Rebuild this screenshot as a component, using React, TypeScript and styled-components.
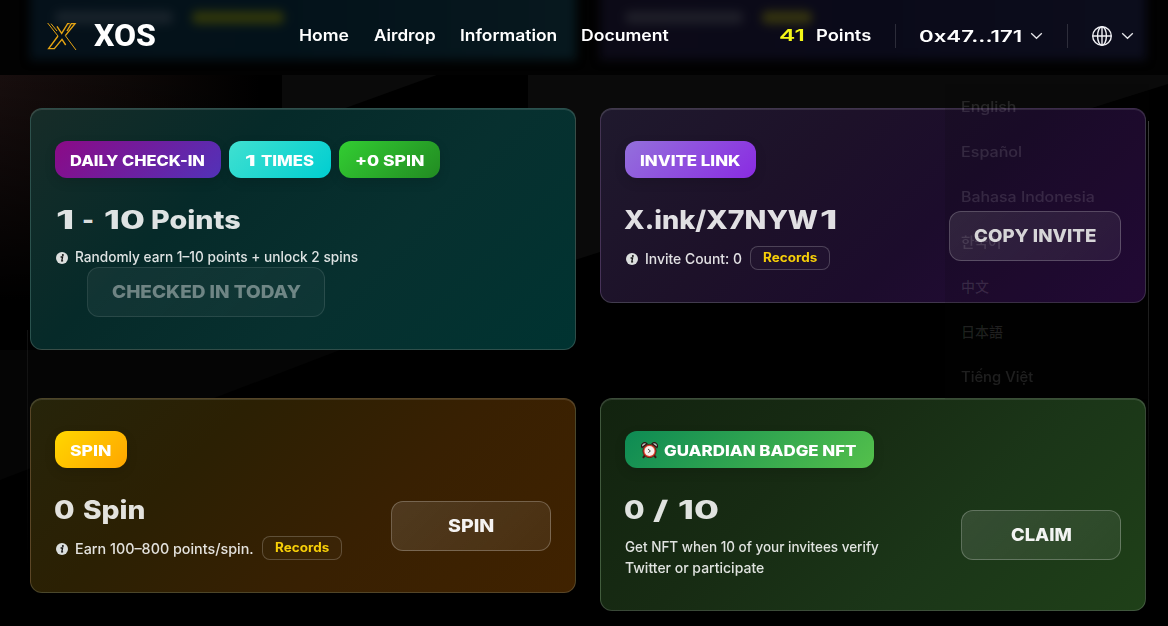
import React, { useLayoutEffect, useRef, useState } from "react";
import styled, { createGlobalStyle, css } from "styled-components";

const GlobalStyle = createGlobalStyle`
  * { box-sizing: border-box; }
  body { margin: 0; background: #000; overflow: hidden; }
`;

const wide = css`
  font-family: Inter, "Noto Sans CJK SC", "Noto Sans CJK KR", sans-serif;
`;

const Page = styled.div`
  position: relative;
  width: 1168px;
  height: 626px;
  overflow: hidden;
  background: #000;
  color: #fff;
  ${wide}
`;

const Backdrop = styled.svg`
  position: absolute;
  inset: 0;
`;

/* Text stretched horizontally to a set measure */
const FitBox = styled.span<{ $w: number; $ml: number }>`
  display: inline-block;
  flex: none;
  width: ${(p) => p.$w}px;
  margin-left: ${(p) => p.$ml}px;
  white-space: nowrap;
  text-align: left;
`;
const FitInner = styled.span`
  display: inline-block;
  transform-origin: 0 50%;
  white-space: pre;
`;

function Fit({ w, ml = 0, children }: { w: number; ml?: number; children: React.ReactNode }) {
  const ref = useRef<HTMLSpanElement>(null);
  const [scale, setScale] = useState(1);
  useLayoutEffect(() => {
    const measure = () => {
      if (ref.current && ref.current.offsetWidth) setScale(w / ref.current.offsetWidth);
    };
    measure();
    document.fonts?.ready.then(measure);
  }, [w]);
  return (
    <FitBox $w={w} $ml={ml}>
      <FitInner ref={ref} style={{ transform: `scaleX(${scale})` }}>{children}</FitInner>
    </FitBox>
  );
}

/* ---------- header ---------- */
const Header = styled.header`
  position: relative;
  z-index: 3;
  height: 72px;
  padding-left: 47px;
  display: flex;
  align-items: center;
  font-size: 16px;
  font-weight: 600;
  line-height: 19px;
`;
const Brand = styled.div`
  display: flex;
  align-items: center;
  gap: 17px;
  width: 252px;
`;
const BrandName = styled.span`
  font: 800 31px/38px Roboto, sans-serif;
`;
const Nav = styled.nav`
  display: flex;
  gap: 24px;
  width: 479.5px;
  padding-bottom: 1px;
`;
const Points = styled.div`
  display: flex;
  gap: 11px;
  padding-bottom: 1px;
`;
const Yellow = styled.span`
  color: #f4f718;
`;
const Divider = styled.i`
  width: 1px;
  height: 24px;
  background: rgba(255, 255, 255, 0.14);
  margin: 0 23px 0 24px;
`;
const Account = styled.div`
  display: flex;
  align-items: center;
  gap: 8px;
`;

/* Cards scrolled away under the header bar */
const Scrolled = styled.div`
  position: absolute;
  z-index: 1;
  top: -20px;
  left: 0;
  width: 1168px;
  height: 95px;
  overflow: hidden;
  background: #020202;
`;
const ScrolledRow = styled.div`
  display: flex;
  gap: 24px;
  padding: 0 22px 0 30px;
  filter: blur(5px);
`;
const Ghost = styled.div<{ $bg: string }>`
  width: 546px;
  height: 80px;
  padding: 31px 0 0 25px;
  display: flex;
  gap: 19px;
  background: ${(p) => p.$bg};
`;
const GhostBar = styled.i<{ $w: number; $c: string }>`
  width: ${(p) => p.$w}px;
  height: 13px;
  border-radius: 5px;
  background: ${(p) => p.$c};
`;

/* ---------- cards ---------- */
const Grid = styled.main`
  position: relative;
  z-index: 2;
  display: grid;
  grid-template-columns: 546px 546px;
  gap: 48px 24px;
  align-items: start;
  padding: 36px 22px 0 30px;
`;
const Card = styled.section<{ $bg: string; $line: string }>`
  border: 1px solid ${(p) => p.$line};
  border-radius: 12px;
  padding: 32px 24px;
  background: ${(p) => p.$bg};
  background-clip: border-box;
  box-shadow: inset 0 1px 0 rgba(255, 255, 255, 0.12);
`;
const Pills = styled.div`
  display: flex;
  gap: 8px;
`;
const Pill = styled.span<{ $bg: string; $w: number }>`
  width: ${(p) => p.$w}px;
  height: 37px;
  padding: 1px 1px 0 0;
  border-radius: 12px;
  display: flex;
  align-items: center;
  justify-content: center;
  gap: 6px;
  background: ${(p) => p.$bg};
  font-size: 14.5px;
  font-weight: 800;
  box-shadow: 0 4px 12px rgba(0, 0, 0, 0.12);
`;
const Body = styled.div<{ $wrap?: boolean }>`
  margin-top: 24px;
  display: flex;
  flex-wrap: ${(p) => (p.$wrap ? "wrap" : "nowrap")};
  align-items: center;
  justify-content: ${(p) => (p.$wrap ? "flex-start" : "space-between")};
`;
const Copy = styled.div<{ $full?: boolean }>`
  width: ${(p) => (p.$full ? "100%" : "auto")};
`;
const Title = styled.h2`
  display: flex;
  margin: 0 0 8px -1px;
  font-size: 25.5px;
  font-weight: 800;
  line-height: 36px;
  height: 36px;
  color: rgba(255, 255, 255, 0.87);
`;
const Info = styled.div<{ $h: number }>`
  display: flex;
  align-items: center;
  height: ${(p) => p.$h}px;
  font: 500 14.5px/21px Inter, sans-serif;
  color: rgba(255, 255, 255, 0.87);
`;
const InfoMark = styled.svg`
  margin: 2px 6.5px 0 1px;
  flex: none;
`;
const Records = styled.button`
  width: 80px;
  height: 24px;
  margin-left: 8.5px;
  padding: 0;
  border: 1px solid rgba(255, 255, 255, 0.2);
  border-radius: 8px;
  background: rgba(255, 255, 255, 0.02);
  color: #f7cf08;
  font-size: 12.5px;
  font-weight: 700;
  line-height: 20px;
  ${wide}
`;
const Action = styled.button<{ $w: number; $off?: boolean }>`
  flex: none;
  width: ${(p) => p.$w}px;
  height: 50px;
  margin-left: ${(p) => (p.$off ? 32 : 0)}px;
  padding: 0 0 2px;
  border: 1px solid rgba(255, 255, 255, 0.25);
  border-radius: 12px;
  background: linear-gradient(135deg, rgba(255, 255, 255, 0.12), rgba(255, 255, 255, 0.07));
  color: #fff;
  opacity: ${(p) => (p.$off ? 0.42 : 0.95)};
  font-size: 17.5px;
  font-weight: 800;
  ${wide}
`;

/* ---------- fading language menu ---------- */
const Menu = styled.ul`
  position: absolute;
  z-index: 4;
  left: 945px;
  top: 84px;
  width: 204px;
  margin: 0;
  padding: 0 0 0 16px;
  list-style: none;
  font-size: 14px;
  font-weight: 500;
  color: rgba(255, 255, 255, 0.12);
  background: rgba(8, 8, 8, 0.12);
  pointer-events: none;
`;
const MenuItem = styled.li`
  height: 45px;
  line-height: 45px;
`;
const Edge = styled.i<{ $x: number; $y: number; $h: number; $a: number }>`
  position: absolute;
  left: ${(p) => p.$x}px;
  top: ${(p) => p.$y}px;
  width: 1px;
  height: ${(p) => p.$h}px;
  background: linear-gradient(rgba(255, 255, 255, ${(p) => p.$a}), rgba(255, 255, 255, 0));
`;

const Chevron = () => (
  <svg width="13" height="8" viewBox="0 0 13 8" fill="none" stroke="#e6e6ea" strokeWidth="1.3">
    <path d="M1.2 1.2 6.5 6.3l5.3-5.1" />
  </svg>
);

const InfoIcon = () => (
  <InfoMark width="12" height="12" viewBox="0 0 12 12">
    <circle cx="6" cy="6" r="6" fill="#dcdfde" />
    <circle cx="6.9" cy="3" r="1" fill="#111" />
    <path d="M4.6 5h2L5.8 8.9h1.3" fill="none" stroke="#111" strokeWidth="1.3" />
  </InfoMark>
);

const Clock = () => (
  <svg width="17" height="17" viewBox="0 0 17 17">
    <path d="m4 13-2 2.8M13 13l2 2.8" stroke="#3b1714" strokeWidth="2" />
    <path d="M1 5.5A3.2 3.2 0 0 1 6 1.6zM16 5.5a3.2 3.2 0 0 0-5-3.9z" fill="#b9c0bd" stroke="#2a1715" strokeWidth="1.2" />
    <circle cx="8.5" cy="9" r="6.6" fill="#e04431" stroke="#4a120c" strokeWidth=".8" />
    <circle cx="8.5" cy="9" r="5" fill="#f6f1ee" />
    <path d="m7 7 2.4 2L7.4 10.6" fill="none" stroke="#4b4645" strokeWidth="1" />
  </svg>
);

const LogoMark = () => (
  <svg width="30" height="30" viewBox="0 0 90 90" fill="none" stroke="#e5a413">
    <path d="M60 30 73 8H84L55 44M68 8H62L44 37 30 16M33 45 5 83H22L45 55L56 72" strokeWidth="4.2" strokeLinejoin="miter" />
    <path d="M2 6 33 45M12 8 30 30M55 44 87 87" strokeWidth="3" />
  </svg>
);

const LANGS: [string, number][] = [
  ["English", 56], ["Español", 61], ["Bahasa Indonesia", 134], ["한국어", 41],
  ["中文", 28], ["日本語", 42], ["Tiếng Việt", 72],
];

export default function App() {
  return (
    <Page>
      <GlobalStyle />
      <Backdrop width="1168" height="626">
        <defs>
          <linearGradient id="warm">
            <stop offset="0" stopColor="#180e0e" />
            <stop offset=".5" stopColor="#0d0807" />
            <stop offset="1" stopColor="#000" />
          </linearGradient>
          <linearGradient id="fade" x1="0" y1="0" x2="0" y2="1">
            <stop offset="0" stopColor="#000" stopOpacity="0" />
            <stop offset="1" stopColor="#000" />
          </linearGradient>
        </defs>
        <path d="M0 72H260V300H0z" fill="url(#warm)" />
        <path d="M0 72H260V300H0z" fill="url(#fade)" />
        <path d="M282 72H445L340 110H282zM528 72H1168V84L1060 118 600 252 528 275z" fill="#0a0a0a" />
        <path d="M0 350H340L0 480z" fill="#050505" />
      </Backdrop>
      <Scrolled>
        <ScrolledRow>
          <Ghost $bg="linear-gradient(90deg,#05111a,#03121a 45%,#07181e)">
            <GhostBar $w={118} $c="#18222a" />
            <GhostBar $w={92} $c="#2f360b" />
          </Ghost>
          <Ghost $bg="linear-gradient(90deg,#0c0a17,#0a0a19 50%,#0c0d1c)">
            <GhostBar $w={118} $c="#1e1e28" />
            <GhostBar $w={50} $c="#34330f" />
          </Ghost>
        </ScrolledRow>
      </Scrolled>

      <Header>
        <Brand>
          <LogoMark />
          <BrandName><Fit w={62}>XOS</Fit></BrandName>
        </Brand>
        <Nav>
          <Fit w={50.5}>Home</Fit>
          <Fit w={62}>Airdrop</Fit>
          <Fit w={97}>Information</Fit>
          <Fit w={88}>Document</Fit>
        </Nav>
        <Points>
          <Yellow><Fit w={26}>41</Fit></Yellow>
          <Fit w={55}>Points</Fit>
        </Points>
        <Divider />
        <Account><Fit w={103}>0x47...171</Fit><Chevron /></Account>
        <Divider />
        <Account>
          <svg width="22" height="22" viewBox="0 0 22 22" fill="none" stroke="#f0f0f4" strokeWidth="1.4">
            <circle cx="11" cy="11" r="9.3" />
            <ellipse cx="11" cy="11" rx="4.4" ry="9.3" />
            <path d="M11 1.7v18.6M1.7 11h18.6" />
          </svg>
          <Chevron />
        </Account>
      </Header>

      <Grid>
        <Card $line="rgba(150,165,155,.28)" $bg="linear-gradient(135deg,#172c28 0%,#062a29 32%,#07302f 62%,#003331 100%)">
          <Pills>
            <Pill $w={166} $bg="linear-gradient(135deg,#8b0a86,#5232b8)"><Fit w={135}>DAILY CHECK-IN</Fit></Pill>
            <Pill $w={102} $bg="linear-gradient(135deg,#40e0d0,#00ced1)"><Fit w={10}>1</Fit><Fit w={53}>TIMES</Fit></Pill>
            <Pill $w={101} $bg="linear-gradient(135deg,#32cd32,#228b22)"><Fit w={69}>+0 SPIN</Fit></Pill>
          </Pills>
          <Body $wrap>
            <Copy $full>
              <Title><Fit w={18} ml={2}>1</Fit><Fit w={12} ml={8}>-</Fit><Fit w={41} ml={10}>10</Fit><Fit w={90} ml={6}>Points</Fit></Title>
              <Info $h={21}><InfoIcon /><Fit w={283.5}>Randomly earn 1–10 points + unlock 2 spins</Fit></Info>
            </Copy>
            <Action $w={238} $off><Fit w={189}>CHECKED IN TODAY</Fit></Action>
          </Body>
        </Card>

        <Card $line="rgba(150,145,160,.3)" $bg="linear-gradient(135deg,#1f192d 0%,#1d1129 35%,#1c0c2c 60%,#260a3b 100%)">
          <Pills>
            <Pill $w={131} $bg="linear-gradient(135deg,#9370db,#8a2be2)"><Fit w={101}>INVITE LINK</Fit></Pill>
          </Pills>
          <Body>
            <Copy>
              <Title><Fit w={82}>X.ink/</Fit><Fit w={112}>X7NYW</Fit><Fit w={17} ml={2}>1</Fit></Title>
              <Info $h={24}><InfoIcon /><Fit w={97}>Invite Count: 0</Fit><Records><Fit w={54}>Records</Fit></Records></Info>
            </Copy>
            <Action $w={172}><Fit w={122}>COPY INVITE</Fit></Action>
          </Body>
        </Card>

        <Card $line="rgba(160,155,125,.3)" $bg="linear-gradient(135deg,#26240a 0%,#2b2003 30%,#382002 62%,#402200 100%)">
          <Pills>
            <Pill $w={72} $bg="linear-gradient(135deg,#ffd700,#ffa500)"><Fit w={41}>SPIN</Fit></Pill>
          </Pills>
          <Body>
            <Copy>
              <Title><Fit w={21}>0</Fit><Fit w={63} ml={8}>Spin</Fit></Title>
              <Info $h={24}><InfoIcon /><Fit w={179}>Earn 100–800 points/spin.</Fit><Records><Fit w={54}>Records</Fit></Records></Info>
            </Copy>
            <Action $w={160}><Fit w={46}>SPIN</Fit></Action>
          </Body>
        </Card>

        <Card $line="rgba(150,160,150,.3)" $bg="linear-gradient(135deg,#12230f 0%,#172b13 35%,#1b3618 65%,#1f4018 100%)">
          <Pills>
            <Pill $w={249} $bg="linear-gradient(135deg,#0d8a54,#54c04b)"><Clock /><Fit w={193}>GUARDIAN BADGE NFT</Fit></Pill>
          </Pills>
          <Body>
            <Copy>
              <Title><Fit w={21}>0</Fit><Fit w={15} ml={8}>/</Fit><Fit w={41} ml={10}>10</Fit></Title>
              <Info $h={21}><Fit w={254}>Get NFT when 10 of your invitees verify</Fit></Info>
              <Info $h={21}><Fit w={139}>Twitter or participate</Fit></Info>
            </Copy>
            <Action $w={160}><Fit w={61}>CLAIM</Fit></Action>
          </Body>
        </Card>
      </Grid>

      <Menu>
        {LANGS.map(([name, w]) => (
          <MenuItem key={name}><Fit w={w}>{name}</Fit></MenuItem>
        ))}
      </Menu>
      <Edge $x={1148} $y={121} $h={390} $a={0.26} />
      <Edge $x={27} $y={330} $h={240} $a={0.07} />
    </Page>
  );
}
